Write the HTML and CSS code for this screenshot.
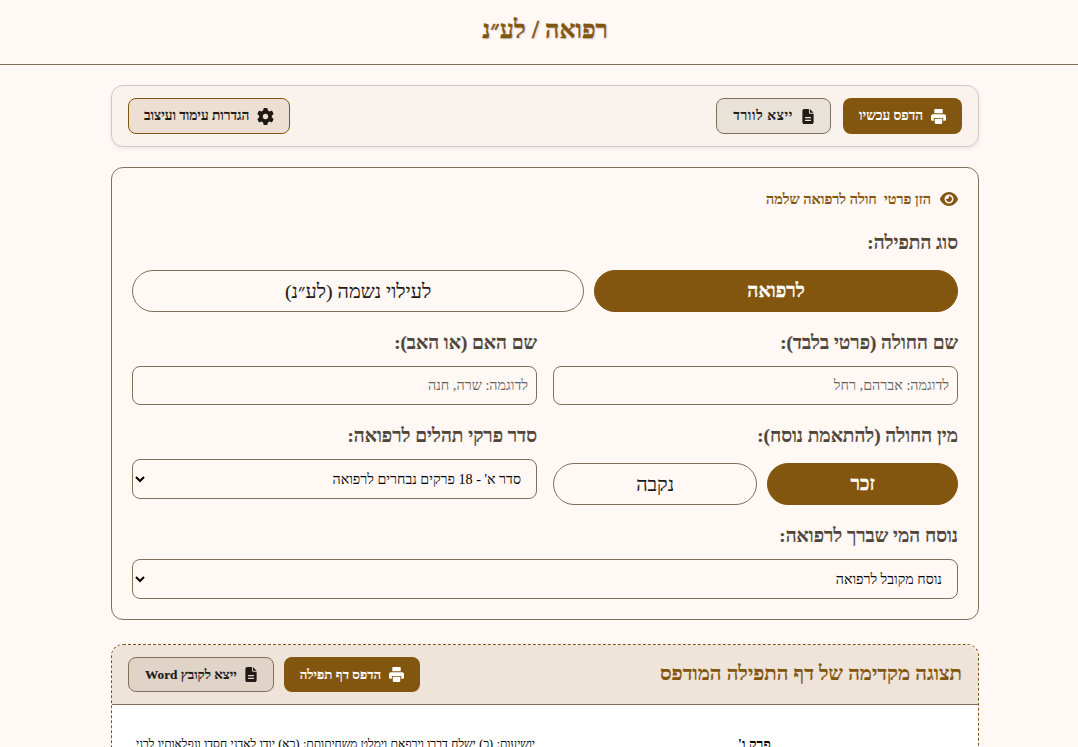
FILE: index.html
```html
<!DOCTYPE html>
<html lang="he" dir="rtl">
<head>
<meta charset="utf-8">
<title>רפואה / לע"נ</title>
<link rel="stylesheet" href="styles.css">
</head>
<body>
<header class="site-header"><h1>רפואה / לע״נ</h1></header>
<main class="wrap">
  <section class="toolbar">
    <div class="tool-group">
      <button class="btn btn-primary"><svg class="ico ico-print" viewBox="0 0 512 512"><path d="M112 32c0-18 14-32 32-32h224c18 0 32 14 32 32v112H112zM64 176h384c35 0 64 29 64 64v128c0 18-14 32-32 32h-64v-96H96v96H32c-18 0-32-14-32-32V240c0-35 29-64 64-64zM128 336h256v144c0 18-14 32-32 32H160c-18 0-32-14-32-32z"/></svg>הדפס עכשיו</button>
      <button class="btn btn-soft"><svg class="ico ico-doc" viewBox="0 0 384 512"><path d="M64 0C28.700 0 0 28.700 0 64v384c0 35.300 28.700 64 64 64h256c35.300 0 64-28.700 64-64V160H256c-17.700 0-32-14.300-32-32V0H64zm192 0v128h128L256 0zM104 272h176c11 0 20 9 20 20s-9 20-20 20H104c-11 0-20-9-20-20s9-20 20-20zm0 96h176c11 0 20 9 20 20s-9 20-20 20H104c-11 0-20-9-20-20s9-20 20-20z" fill-rule="evenodd"/></svg>ייצא לוורד</button>
    </div>
    <button class="btn btn-settings"><svg class="ico ico-gear" viewBox="0 0 512 512"><path d="M495.900 166.600c3.200 8.700.5 18.400-6.400 24.600l-43.300 39.400c1.100 8.300 1.700 16.800 1.700 25.400s-.6 17.100-1.700 25.400l43.300 39.400c6.900 6.200 9.600 15.900 6.400 24.600-4.400 11.900-9.700 23.300-15.800 34.300l-4.700 8.100c-6.600 11-14 21.400-22.100 31.200-5.900 7.200-15.700 9.600-24.500 6.800l-55.700-17.700c-13.400 10.300-28.200 18.900-44 25.400l-12.500 57.100c-2 9.100-9 16.300-18.200 17.800-13.800 2.300-28 3.500-42.500 3.500s-28.700-1.200-42.500-3.500c-9.200-1.500-16.200-8.700-18.200-17.800l-12.500-57.100c-15.800-6.500-30.600-15.100-44-25.400l-55.600 17.800c-8.800 2.800-18.600.3-24.500-6.800-8.100-9.800-15.500-20.200-22.100-31.200l-4.700-8.100c-6.100-11-11.400-22.400-15.800-34.300-3.200-8.700-.5-18.400 6.400-24.600l43.300-39.400c-1.100-8.400-1.700-16.900-1.700-25.500s.6-17.100 1.700-25.400l-43.300-39.400c-6.900-6.200-9.600-15.900-6.400-24.600 4.400-11.900 9.700-23.300 15.800-34.300l4.700-8.100c6.600-11 14-21.400 22.100-31.200 5.900-7.200 15.700-9.600 24.500-6.800l55.700 17.700c13.400-10.300 28.200-18.900 44-25.400l12.500-57.100c2-9.100 9-16.300 18.200-17.800C227.300 1.200 241.500 0 256 0s28.700 1.200 42.500 3.500c9.200 1.500 16.200 8.700 18.200 17.800l12.500 57.100c15.800 6.500 30.600 15.100 44 25.400l55.700-17.700c8.800-2.800 18.600-.3 24.500 6.800 8.100 9.800 15.500 20.200 22.100 31.200l4.700 8.100c6.100 11 11.400 22.400 15.800 34.300zM256 336a80 80 0 1 0 0-160 80 80 0 1 0 0 160z"/></svg>הגדרות עימוד ועיצוב</button>
  </section>

  <section class="form-card">
    <p class="hint"><svg class="ico-eye" viewBox="0 0 576 512"><path d="M288 32c-80.800 0-145.500 36.800-192.600 80.600C48.600 156 17.300 208 2.500 243.700c-3.300 7.900-3.300 16.700 0 24.600C17.300 304 48.600 356 95.400 399.400 142.500 443.200 207.200 480 288 480s145.500-36.800 192.600-80.600c46.800-43.500 78.100-95.400 93-131.100 3.300-7.900 3.300-16.700 0-24.600-14.900-35.700-46.200-87.700-93-131.100C433.500 68.800 368.800 32 288 32zM144 256a144 144 0 1 1 288 0 144 144 0 1 1-288 0zm144-64c0 35.300-28.700 64-64 64-7.100 0-13.900-1.200-20.300-3.300-5.500-1.800-11.900 1.600-11.700 7.400.3 6.900 1.300 13.800 3.200 20.700 13.700 51.200 66.400 81.600 117.600 67.900s81.600-66.400 67.900-117.600c-11.100-41.500-47.800-69.400-88.600-71.100-5.800-.2-9.200 6.100-7.400 11.700 2.100 6.400 3.300 13.200 3.300 20.300z"/></svg>הזן פרטי  חולה לרפואה שלמה</p>

    <div class="field field-gap">
      <label class="lbl">סוג התפילה:</label>
      <div class="pills">
        <button class="pill pill-on">לרפואה</button>
        <button class="pill">לעילוי נשמה (לע״נ)</button>
      </div>
    </div>

    <div class="grid">
      <div class="field">
        <label class="lbl" for="n1">שם החולה (פרטי בלבד):</label>
        <input id="n1" class="inp" placeholder="לדוגמה: אברהם, רחל">
      </div>
      <div class="field">
        <label class="lbl" for="n2">שם האם (או האב):</label>
        <input id="n2" class="inp" placeholder="לדוגמה: שרה, חנה">
      </div>
      <div class="field">
        <label class="lbl">מין החולה (להתאמת נוסח):</label>
        <div class="pills">
          <button class="pill pill-on">זכר</button>
          <button class="pill">נקבה</button>
        </div>
      </div>
      <div class="field">
        <label class="lbl" for="s1">סדר פרקי תהלים לרפואה:</label>
        <select id="s1" class="sel"><option>סדר א' - 18 פרקים נבחרים לרפואה</option></select>
      </div>
    </div>

    <div class="field">
      <label class="lbl" for="s2">נוסח המי שברך לרפואה:</label>
      <select id="s2" class="sel"><option>נוסח מקובל לרפואה</option></select>
    </div>
  </section>

  <section class="preview">
    <div class="preview-head">
      <h2>תצוגה מקדימה של דף התפילה המודפס</h2>
      <div class="tool-group tool-group-sm">
        <button class="btn btn-primary btn-sm"><svg class="ico ico-print" viewBox="0 0 512 512"><path d="M112 32c0-18 14-32 32-32h224c18 0 32 14 32 32v112H112zM64 176h384c35 0 64 29 64 64v128c0 18-14 32-32 32h-64v-96H96v96H32c-18 0-32-14-32-32V240c0-35 29-64 64-64zM128 336h256v144c0 18-14 32-32 32H160c-18 0-32-14-32-32z"/></svg>הדפס דף תפילה</button>
        <button class="btn btn-word btn-sm"><svg class="ico ico-doc" viewBox="0 0 384 512"><path d="M64 0C28.700 0 0 28.700 0 64v384c0 35.300 28.700 64 64 64h256c35.300 0 64-28.700 64-64V160H256c-17.700 0-32-14.300-32-32V0H64zm192 0v128h128L256 0zM104 272h176c11 0 20 9 20 20s-9 20-20 20H104c-11 0-20-9-20-20s9-20 20-20zm0 96h176c11 0 20 9 20 20s-9 20-20 20H104c-11 0-20-9-20-20s9-20 20-20z" fill-rule="evenodd"/></svg>ייצא לקובץ Word</button>
      </div>
    </div>
    <div class="sheet">
      <div class="col">
        <h3>פרק ו'</h3>
      </div>
      <div class="col">
        <p>יושיעות: (כ) ישלח דברו וירפאם וימלט משחיתותם: (כא) יודו לאדני חסדו ונפלאותיו לבני</p>
      </div>
    </div>
  </section>
</main>
</body>
</html>
```
FILE: styles.css
```css
* { box-sizing: border-box; }
html, body { margin: 0; height: 747px; overflow: hidden; }
body {
  background: #fff8f5;
  color: #201a17;
  font-family: "Liberation Serif", serif;
}
button, input, select { font-family: inherit; }
.site-header {
  height: 65px;
  padding-left: 12px;
  border-bottom: 1px solid #7f7057;
  display: flex;
  align-items: center;
  justify-content: center;
}
.site-header h1 {
  margin: 0 0 4px;
  font-size: 25px;
  font-weight: 700;
  color: #835610;
  -webkit-text-stroke: .3px #835610;
  text-shadow: 1px 1px 2px rgba(0,0,0,.2);
}
.wrap {
  width: 868px;
  margin: 20px auto 0 111px;
  display: flex;
  flex-direction: column;
}
.toolbar {
  height: 62px;
  padding: 0 16px;
  margin-bottom: 20px;
  background: #faf2ec;
  border: 1px solid #d1c6d4;
  border-radius: 12px;
  box-shadow: 0 2px 4px rgba(0,0,0,.08);
  display: flex;
  align-items: center;
  justify-content: space-between;
}
.tool-group { display: flex; gap: 12px; }
.tool-group-sm { gap: 10px; }
.btn {
  height: 36px;
  padding: 0 15px;
  border-radius: 8px;
  border: 1px solid transparent;
  font-size: 13.6px;
  font-weight: 700;
  display: inline-flex;
  align-items: center;
  gap: 8px;
  color: #201a17;
  -webkit-text-stroke: .15px currentColor;
}
.btn-sm { height: 35px; font-size: 13.3px; }
.ico { height: 15px; fill: currentColor; flex: none; }
.ico-print { width: 15px; height: 15px; }
.ico-doc { width: 12px; }
.ico-gear { width: 17px; height: 17px; }
.btn-primary { background: #835610; color: #fff; }
.btn-soft { background: #e9e2d9; border-color: #7f7057; padding: 0 16px; letter-spacing: .7px; gap: 9px; }
.btn-settings { background: #ede0d2; border-color: #835610; }
.btn-word { background: #e0d3c7; border-color: #7f7057; padding: 0 16px; }
.form-card {
  height: 453px;
  padding: 20px;
  margin-bottom: 24px;
  border: 1px solid #7f7057;
  border-radius: 12px;
}
.hint {
  margin: 0 0 22px;
  height: 22px;
  display: flex;
  align-items: center;
  gap: 9px;
  font-size: 14.4px;
  font-weight: 700;
  color: #835610;
  white-space: pre;
  -webkit-text-stroke: .15px #835610;
}
.ico-eye { width: 18px; height: 16px; fill: #835610; flex: none; }
.field { display: flex; flex-direction: column; }
.field-gap { margin-bottom: 20px; }
.lbl {
  font-size: 19px;
  font-weight: 700;
  color: #4f4539;
  line-height: 22px;
  margin-bottom: 12px;
  -webkit-text-stroke: .2px #4f4539;
}
.pills { display: flex; gap: 10px; margin-top: 4px; }
.pill {
  flex: 1 1 auto;
  height: 42px;
  border-radius: 21px;
  border: 1px solid #7f7057;
  background: transparent;
  font-size: 19.8px;
  color: #201a17;
  -webkit-text-stroke: .15px #201a17;
}
.pill-on {
  background: #835610;
  border-color: #835610;
  color: #fff;
  font-weight: 700;
  font-size: 19.4px;
  -webkit-text-stroke: .3px #fff;
}
.grid {
  display: grid;
  grid-template-columns: 1fr 1fr;
  column-gap: 16px;
  row-gap: 20px;
  margin-bottom: 20px;
}
.grid .field { align-self: start; }
.inp {
  height: 39px;
  padding: 0 8px;
  border: 1px solid #7f7057;
  border-radius: 8px;
  background: transparent;
  font-size: 14.3px;
  color: #201a17;
}
.inp::placeholder { color: #66615b; }
.sel {
  height: 40px;
  padding: 0 11px;
  border: 1px solid #7f7057;
  border-radius: 8px;
  background-color: transparent;
  font-size: 14.2px;
  color: #000;
}
.preview {
  height: 200px;
  border: 1px dashed #835610;
  border-radius: 12px;
  background: #fff;
  overflow: hidden;
}
.preview-head {
  height: 60px;
  padding: 0 16px;
  background: #efe4da;
  border-bottom: 1px solid #7f7057;
  display: flex;
  align-items: center;
  justify-content: space-between;
}
.preview-head h2 {
  margin: 0 0 3px;
  font-size: 20.4px;
  font-weight: 700;
  color: #835610;
  -webkit-text-stroke: .2px #835610;
}
.sheet {
  padding: 28px 24px 0;
  display: grid;
  grid-template-columns: 1fr 1fr;
  column-gap: 20px;
  font-size: 12px;
  color: #000;
}
.col h3 { margin: 4px 0 0; font-size: 14px; text-align: center; }
.col p { margin: 4px 0 0; text-align: justify; text-align-last: justify; white-space: nowrap; -webkit-text-stroke: .1px #000; }
```
